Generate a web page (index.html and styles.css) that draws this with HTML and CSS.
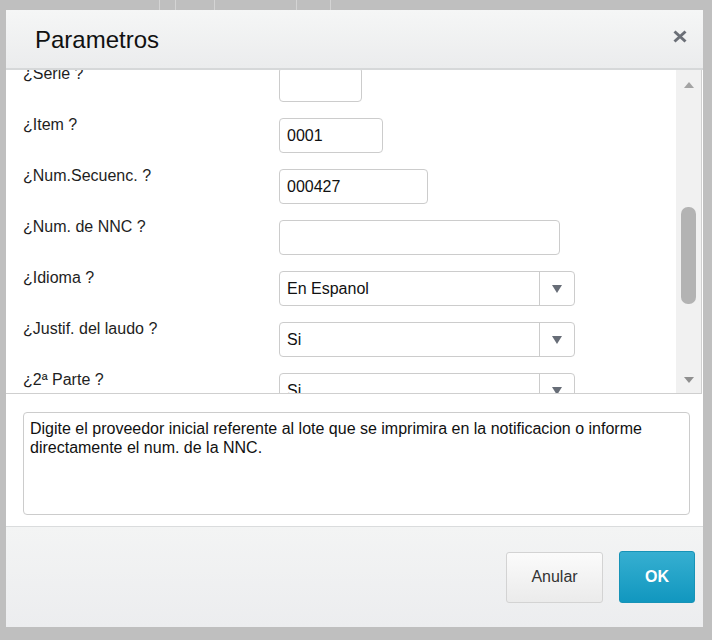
FILE: index.html
```
<!DOCTYPE html>
<html>
  <head>
    <meta charset="utf-8" />
    <meta name="viewport" content="width=device-width, initial-scale=1" />
    <link rel="stylesheet" href="styles.css">
  </head>
  <body>
    <div class="dialog">
      <div class="dialog-header">
        <h1 class="dialog-title">Parametros</h1>
        <button class="close" type="button">
          <svg width="14" height="13" viewBox="0 0 14 13">
            <path d="M1.5 1.5 L12.5 11.5 M12.5 1.5 L1.5 11.5" stroke="#6b6f77" stroke-width="3" fill="none" />
          </svg>
        </button>
      </div>

      <div class="dialog-body">
        <div class="params">
          <div class="param-list">
            <div class="param-rows">
              <div class="param-row">
                <label class="param-label">¿Serie ?</label>
                <input class="field w-serie" type="text" value="">
              </div>
              <div class="param-row">
                <label class="param-label">¿Item ?</label>
                <input class="field w-item" type="text" value="0001">
              </div>
              <div class="param-row">
                <label class="param-label">¿Num.Secuenc. ?</label>
                <input class="field w-seq" type="text" value="000427">
              </div>
              <div class="param-row">
                <label class="param-label">¿Num. de NNC ?</label>
                <input class="field w-nnc" type="text" value="">
              </div>
              <div class="param-row">
                <label class="param-label">¿Idioma ?</label>
                <div class="combo">
                  <span class="combo-value">En Espanol</span>
                  <span class="combo-arrow"></span>
                </div>
              </div>
              <div class="param-row">
                <label class="param-label">¿Justif. del laudo ?</label>
                <div class="combo">
                  <span class="combo-value">Si</span>
                  <span class="combo-arrow"></span>
                </div>
              </div>
              <div class="param-row">
                <label class="param-label">¿2ª Parte ?</label>
                <div class="combo">
                  <span class="combo-value">Si</span>
                  <span class="combo-arrow"></span>
                </div>
              </div>
            </div>
          </div>
          <div class="scrollbar">
            <div class="scroll-btn scroll-up"><span class="tri-up"></span></div>
            <div class="scroll-thumb"></div>
            <div class="scroll-btn scroll-down"><span class="tri-down"></span></div>
          </div>
        </div>

        <div class="help">Digite el proveedor inicial referente al lote que se imprimira en la notificacion o informe directamente el num. de la NNC.</div>
      </div>

      <div class="dialog-footer">
        <button class="btn btn-default" type="button">Anular</button>
        <button class="btn btn-primary" type="button">OK</button>
      </div>
    </div>
  </body>
</html>
```

FILE: styles.css
```
html,
body {
  margin: 0;
  height: 640px;
}
body {
  background-color: #bfbfbf;
  background-image: linear-gradient(to right,
      transparent 159px, #d4d4d4 159px, #d4d4d4 160px,
      transparent 160px, transparent 175px, #d4d4d4 175px, #d4d4d4 176px,
      transparent 176px, transparent 214px, #d4d4d4 214px, #d4d4d4 215px,
      transparent 215px, transparent 296px, #d4d4d4 296px, #d4d4d4 297px,
      transparent 297px, transparent 330px, #d4d4d4 330px, #d4d4d4 331px,
      transparent 331px);
  background-size: 100% 10px;
  background-repeat: no-repeat;
  padding: 10px 9px 13px 6px;
  box-sizing: border-box;
  font-family: "Liberation Sans", Arial, sans-serif;
  font-size: 16px;
  color: #1e1e1e;
}

.dialog {
  width: 697px;
  height: 617px;
  background: white;
  display: flex;
  flex-direction: column;
}

/* header */
.dialog-header {
  height: 58px;
  flex: none;
  display: flex;
  align-items: center;
  justify-content: space-between;
  padding: 0 16px 0 29px;
  background: linear-gradient(#f5f6f6, #ebeced);
  border-bottom: 2px solid #d6d8d9;
}
.dialog-title {
  margin: 0;
  font-size: 24px;
  font-weight: normal;
  color: #111;
  position: relative;
  top: 1px;
}
.close {
  border: none;
  background: none;
  padding: 0;
  width: 14px;
  height: 13px;
  display: block;
  margin-top: -6px;
}
.close svg {
  display: block;
}

/* body */
.dialog-body {
  flex: 1;
  display: flex;
  flex-direction: column;
}
.params {
  height: 323px;
  flex: none;
  display: flex;
  border-right: 1px solid #cfcfcf;
  border-bottom: 1px solid #cfcfcf;
  margin-right: 1px;
}
.param-list {
  flex: 1;
  overflow: hidden;
}
.param-rows {
  margin-top: -3px;
  padding-left: 17px;
  display: flex;
  flex-direction: column;
  gap: 16px;
}
.param-row {
  display: grid;
  grid-template-columns: 256px auto;
  align-items: start;
}
.param-label {
  line-height: 18px;
  margin-top: -2px;
}

.field {
  height: 35px;
  box-sizing: border-box;
  border: 1px solid #cccccc;
  border-radius: 4px;
  padding: 0 7px;
  font-family: "Liberation Sans", Arial, sans-serif;
  font-size: 16px;
  color: #111;
  background: white;
  outline: none;
  margin: 0;
}
.w-serie { width: 83px; }
.w-item { width: 104px; }
.w-seq { width: 149px; }
.w-nnc { width: 281px; }

.combo {
  width: 296px;
  height: 35px;
  box-sizing: border-box;
  border: 1px solid #cccccc;
  border-radius: 4px;
  display: flex;
  align-items: stretch;
}
.combo-value {
  flex: 1;
  padding-left: 7px;
  line-height: 33px;
  color: #111;
}
.combo-arrow {
  width: 34px;
  border-left: 1px solid #cccccc;
  display: flex;
  align-items: center;
  justify-content: center;
}
.combo-arrow::after {
  content: "";
  border-left: 5px solid transparent;
  border-right: 5px solid transparent;
  border-top: 8px solid #676d77;
}

/* fake scroll track */
.scrollbar {
  width: 25px;
  flex: none;
  background: #f1f1f1;
  display: flex;
  flex-direction: column;
  align-items: center;
}
.scroll-btn {
  display: flex;
  align-items: center;
  justify-content: center;
  width: 100%;
}
.scroll-up {
  height: 30px;
}
.scroll-down {
  height: 26px;
  margin-top: auto;
}
.tri-up {
  border-left: 5.5px solid transparent;
  border-right: 5.5px solid transparent;
  border-bottom: 6px solid #a3a3a3;
}
.tri-down {
  border-left: 5.5px solid transparent;
  border-right: 5.5px solid transparent;
  border-top: 6px solid #8f8f8f;
}
.scroll-thumb {
  width: 15px;
  height: 97px;
  margin-top: 107px;
  border-radius: 7px;
  background: #b3b3b3;
}

.help {
  height: 103px;
  box-sizing: border-box;
  margin: 18px 13px 11px 17px;
  border: 1px solid #cccccc;
  border-radius: 4px;
  padding: 6px 6px;
  line-height: 19px;
  color: #111;
}

/* footer */
.dialog-footer {
  height: 100px;
  flex: none;
  border-top: 1px solid #dadcdd;
  background: linear-gradient(#f3f4f4, #ecedef);
  display: flex;
  align-items: center;
  justify-content: flex-end;
  gap: 16px;
  padding-right: 8px;
}
.btn {
  font-family: "Liberation Sans", Arial, sans-serif;
  font-size: 16px;
  border-radius: 3px;
  margin: 0;
  cursor: pointer;
}
.btn-default {
  width: 97px;
  height: 51px;
  color: #333;
  border: 1px solid #d3d3d3;
  background: linear-gradient(#fbfbfb, #ebebeb);
}
.btn-primary {
  width: 76px;
  height: 52px;
  color: white;
  font-weight: bold;
  border: 1px solid #1793b7;
  background: linear-gradient(#36afd1, #1197bf);
  margin-top: -1px;
}
```
